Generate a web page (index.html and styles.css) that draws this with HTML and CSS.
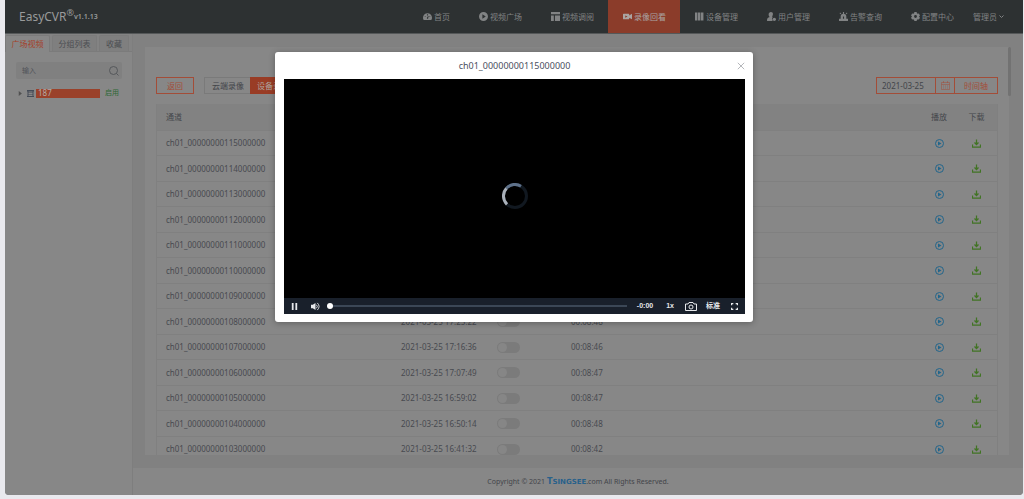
FILE: index.html
```html
<!DOCTYPE html>
<html lang="zh-CN">
<head>
<meta charset="utf-8">
<meta name="viewport" content="width=device-width, initial-scale=1">
<title>EasyCVR</title>
<link rel="stylesheet" href="styles.css">
</head>
<body>
<svg class="sprite" aria-hidden="true">
  <symbol id="gauge" viewBox="0 0 16 16"><path fill-rule="evenodd" d="M8 2a8 8 0 0 0-8 8c0 2 .6 3 1.300 4h13.400c.8-1 1.300-2 1.300-4a8 8 0 0 0-8-8zM7 4h2v2H7zM3 8h2v1H3zm8 0h2v1h-2zM9 7l1 0-1 5H7v-2z"/></symbol>
  <symbol id="playfill" viewBox="0 0 16 16"><path fill-rule="evenodd" d="M8 0a8 8 0 1 0 0 16A8 8 0 0 0 8 0zM6 4l6 4-6 4z"/></symbol>
  <symbol id="layout" viewBox="0 0 16 16"><path d="M0 0h16v4H0zM0 6h5v10H0zM7 6h9v10H7z"/></symbol>
  <symbol id="camera" viewBox="0 0 16 16"><path fill-rule="evenodd" d="M1 3h9q1 0 1 1v2l5-3v10l-5-3v2q0 1-1 1H1q-1 0-1-1V4q0-1 1-1zm3 3v4l4-2z"/></symbol>
  <symbol id="device" viewBox="0 0 16 16"><path d="M0 1h4v14H0zM5 1h4v14H5zM10 1h5v14h-5z"/></symbol>
  <symbol id="user" viewBox="0 0 16 16"><path d="M7 0c5 0 4 6 2 8l1 1-1 3 1 4H0c0-5 1-6 5-7C2 7 2 0 7 0z"/><circle cx="13" cy="13" r="3"/></symbol>
  <symbol id="alarm" viewBox="0 0 16 16"><path fill-rule="evenodd" d="M7 0h2v3H7zM1 2l1-1 2 2-1 1zM12 3l2-2 1 1-2 2zM3 12V8a5 5 0 0 1 10 0v4h3v4H0v-4zm4-4v4h2V8z"/></symbol>
  <symbol id="gear" viewBox="0 0 16 16"><path fill-rule="evenodd" d="M6 0h4l.5 2 1.500 1 2-.5 2 3.500-1.500 1.500v1L16 10l-2 3.500-2-.5-1.500 1L10 16H6l-.5-2L4 13l-2 .5L0 10l1.500-1.500v-1L0 6l2-3.500L4 3l1.500-1zM8 5.500a2.500 2.500 0 1 0 0 5 2.500 2.500 0 0 0 0-5z"/></symbol>
  <symbol id="play" viewBox="0 0 18 18"><circle cx="9" cy="9" r="8" fill="none" stroke="currentColor" stroke-width="2"/><path d="M6 5l7 4-7 4z"/></symbol>
  <symbol id="download" viewBox="0 0 18 18"><path d="M1 11v5h16v-5M9 1v10M5 7l4 4 4-4" fill="none" stroke="currentColor" stroke-width="2.500"/></symbol>
</svg>
<div class="app">
  <header class="header">
    <div class="brand">EasyCVR<sup>®</sup><span class="version">v1.1.13</span></div>
    <nav class="nav">
      <a href="#"><svg class="icon"><use href="#gauge"/></svg>首页</a>
      <a href="#"><svg class="icon"><use href="#playfill"/></svg>视频广场</a>
      <a href="#"><svg class="icon"><use href="#layout"/></svg>视频调阅</a>
      <a href="#" class="active"><svg class="icon"><use href="#camera"/></svg>录像回看</a>
      <a href="#"><svg class="icon"><use href="#device"/></svg>设备管理</a>
      <a href="#"><svg class="icon"><use href="#user"/></svg>用户管理</a>
      <a href="#"><svg class="icon"><use href="#alarm"/></svg>告警查询</a>
      <a href="#"><svg class="icon"><use href="#gear"/></svg>配置中心</a>
    </nav>
    <button class="account" type="button">管理员<svg class="chevron" viewBox="0 0 10 10"><path d="M1 3l4 4 4-4"/></svg></button>
  </header>
  <div class="body">
    <aside class="sidebar">
      <div class="tabs">
        <button type="button" class="current">广场视频</button>
        <button type="button">分组列表</button>
        <button type="button">收藏</button>
      </div>
      <div class="search">
        <input type="text" placeholder="输入" aria-label="输入">
        <svg viewBox="0 0 20 20"><circle cx="9" cy="9" r="8"/><path d="M15 15l4 4"/></svg>
      </div>
      <div class="tree">
        <svg class="caret" viewBox="0 0 6 8"><path d="M1 0l5 4-5 4z"/></svg>
        <svg class="server" viewBox="0 0 14 14"><path d="M0 0h14v3H0zM1 3h2v11H1zM11 3h2v11h-2zM3 5h8v1H3zM3 9h8v1H3zM0 12h14v2H0z"/></svg>
        <span class="node">187</span>
        <a href="#">启用</a>
      </div>
    </aside>
    <div class="content">
      <main class="panel">
        <div class="toolbar">
          <button type="button" class="outline back">返回</button>
          <div class="switch"><button type="button">云端录像</button><button type="button" class="on">设备录像</button></div>
          <div class="dates">
            <input type="text" value="2021-03-25" aria-label="日期">
            <button type="button" class="calendar" aria-label="选择日期"><svg viewBox="0 0 18 18"><path d="M1 3h16v14H1zM1 7h16M5 0v4M13 0v4M4 10h2M8 10h2M12 10h2M4 14h2M8 14h2M12 14h2"/></svg></button>
            <button type="button" class="axis">时间轴</button>
          </div>
        </div>
        <table class="records">
          <colgroup><col class="c-channel"><col class="c-time"><col class="c-lock"><col><col class="c-play"><col class="c-load"></colgroup>
          <thead><tr><th>通道</th><th>开始时间</th><th>锁定</th><th>时长</th><th class="mid">播放</th><th class="mid">下载</th></tr></thead>
          <tbody id="rows"></tbody>
        </table>
      </main>
      <footer class="footer">Copyright © 2021 <strong>T<small>SINGSEE</small></strong>.com All Rights Reserved.</footer>
    </div>
  </div>
  <div class="thumb"></div>
  <section class="dialog" role="dialog" aria-labelledby="title">
    <div class="dialog-head">
      <h2 id="title">ch01_00000000115000000</h2>
      <button type="button" aria-label="关闭"><svg viewBox="0 0 10 10"><path d="M1 1l8 8M9 1L1 9"/></svg></button>
    </div>
    <div class="screen">
      <svg class="spinner" viewBox="0 0 26 26"><circle cx="13" cy="13" r="11.500" stroke="#111820"/><path d="M5 21.300A11.500 11.500 0 0 1 4.500 5.200" stroke="#a9b0b9"/><path d="M4.500 5.200A11.500 11.500 0 0 1 19 3.200" stroke="#5e718a"/></svg>
    </div>
    <div class="controls">
      <button type="button" aria-label="暂停"><svg viewBox="0 0 10 10"><path d="M2 1h2v8H2zM6 1h2v8H6z"/></svg></button>
      <button type="button" class="volume" aria-label="音量"><svg viewBox="0 0 10 10"><path d="M0 3h2l3-2v8L2 7H0z"/><path class="line" d="M6 3q2 2 0 4M7 1q4 4 0 8"/></svg></button>
      <input type="range" value="0" aria-label="进度">
      <span class="remain">-0:00</span>
      <button type="button" class="rate">1x</button>
      <button type="button" class="snap" aria-label="截图"><svg viewBox="0 0 24 18"><path class="line" d="M1 4h5l2-3h8l2 3h5v13H1z"/><circle class="line" cx="12" cy="10" r="4"/></svg></button>
      <button type="button" class="quality">标准</button>
      <button type="button" class="full" aria-label="全屏"><svg viewBox="0 0 12 12"><path class="line" d="M1 4V1h3M8 1h3v3M11 8v3H8M4 11H1V8"/></svg></button>
    </div>
  </section>
</div>
<script src="app.js"></script>
</body>
</html>
```
FILE: styles.css
```css
* { box-sizing: border-box; }
body {
  margin: 0;
  padding: 0 1px 4px 5px;
  background: #e9e9ee;
  color: #43454a;
  font: 8px/12px "Noto Sans", "Noto Sans CJK SC", sans-serif;
}
button, input {
  margin: 0;
  padding: 0;
  border: 0;
  border-radius: 0;
  background: none;
  color: inherit;
  font: inherit;
}
a { color: inherit; text-decoration: none; }
svg { display: block; flex: none; fill: currentColor; }
.sprite { position: absolute; width: 0; height: 0; }
.app {
  position: relative;
  display: flex;
  flex-direction: column;
  height: calc(100vh - 4px);
  overflow: hidden;
  border-radius: 0 0 4px 4px;
  background: #818181;
}
.header {
  display: flex;
  flex: none;
  height: 34px;
  padding-right: 19px;
  border-bottom: 1px solid #555859;
  background: #2d3132;
  color: #818384;
}
.brand {
  display: flex;
  align-items: center;
  flex: 1;
  padding-left: 14px;
  color: #999b9b;
  font-size: 12px;
}
.brand sup { align-self: flex-start; padding-top: 7px; font-size: 9px; line-height: 12px; }
.version { font-size: 7px; font-weight: 600; }
.nav { display: flex; }
.nav a { display: flex; align-items: center; gap: 2px; padding: 0 14px 0 15px; }
.nav a.active { background: #8b3c2a; color: #aaa4a2; }
.icon { width: 9px; height: 9px; }
.account { display: flex; align-items: center; gap: 2px; padding-left: 5px; }
.chevron { width: 5px; height: 5px; fill: none; stroke: currentColor; stroke-width: 2; }
.body { display: flex; flex: 1; min-height: 0; }
.sidebar { flex: none; width: 128px; border-right: 1px solid #7e7e7e; background: #878787; }
.tabs { display: flex; gap: 2px; height: 18px; padding-top: 1px; background: #838383; border-bottom: 1px solid #7b7b7b; }
.tabs button {
  width: 45px;
  height: 16px;
  border: 1px solid #7b7b7b;
  border-bottom: 0;
  border-radius: 2px 2px 0 0;
  background: #7f7f7f;
  color: #4b4d51;
}
.tabs button:last-child { width: 30px; }
.tabs .current { height: 17px; background: #878787; color: #a44029; }
.search {
  display: flex;
  align-items: center;
  height: 17px;
  margin: 10px 10px 9px 11px;
  padding: 0 3px 0 6px;
  border-radius: 2px;
  background: #808080;
}
.search input { flex: 1; min-width: 0; font-size: 7px; }
.search input::placeholder { color: #515359; opacity: 1; }
.search svg { width: 10px; height: 10px; fill: none; stroke: #55575b; stroke-width: 2; }
.tree { display: flex; align-items: center; height: 10px; padding-left: 13px; }
.caret { width: 4px; height: 5px; margin-right: 5px; color: #515151; }
.server { width: 7px; height: 7px; margin-right: 2px; color: #444b57; }
.node { width: 64px; height: 9px; margin-right: 5px; padding-left: 2px; background: #9a412a; color: #b4aaa7; line-height: 8px; }
.tree a { color: #2f6735; font-size: 7px; }
.content { display: flex; flex: 1; flex-direction: column; min-width: 0; }
.panel {
  flex: 1;
  min-height: 0;
  margin: 13px 14px 13px 12px;
  padding: 30px 11px 0;
  overflow: hidden;
  background: #878787;
}
.toolbar { display: flex; height: 17px; margin-bottom: 10px; }
.outline { width: 38px; border: 1px solid #a34d38; color: #a34d38; }
.switch { display: flex; margin-left: 10px; border: 1px solid #7a7a7a; }
.switch button { width: 46px; }
.switch .on { margin: -1px; background: #993c25; color: #aea39f; }
.dates { display: flex; margin-left: auto; border: 1px solid #a34d38; color: #a34d38; }
.dates input { width: 58px; padding-left: 5px; color: #43454a; }
.calendar { display: grid; place-items: center; width: 20px; border: solid #a34d38; border-width: 0 1px; }
.calendar svg { width: 9px; height: 9px; fill: none; stroke: currentColor; stroke-width: 1; }
.axis { width: 42px; }
.records { width: 100%; border: 1px solid #808080; border-top: 0; border-collapse: separate; border-spacing: 0; table-layout: fixed; }
.records th { height: 26px; padding: 0 0 0 9px; background: #828282; color: #45474c; font-weight: 400; text-align: left; }
.records td { height: 25px; padding: 0 0 0 9px; border-top: 1px solid #808080; color: #484a50; }
.records tr:nth-child(even) td { height: 26px; }
.records .mid { padding: 0; text-align: center; }
.c-channel { width: 235px; }
.c-time { width: 96px; }
.c-lock { width: 74px; }
.c-play { width: 34px; }
.c-load { width: 41px; }
.mid button { display: block; margin: 0 auto; }
.mid svg { width: 9px; height: 9px; }
.see { color: #21658b; }
.get { color: #417424; }
.toggle { display: block; width: 23px; height: 11px; padding: 1px; border-radius: 6px; background: #7b7b7b; appearance: none; }
.toggle::before { display: block; width: 9px; height: 9px; border-radius: 50%; background: #868686; content: ""; }
.toggle:checked::before { margin-left: auto; }
.footer { flex: none; height: 27px; background: #878787; font-size: 7px; line-height: 27px; text-align: center; }
.footer strong { color: #28618b; font: bold 8px/12px "DejaVu Sans", sans-serif; }
.footer small { font-size: 7px; }
.thumb { position: absolute; top: 47px; right: 12px; width: 3px; height: 49px; border-radius: 2px; background: #727272; }
.dialog {
  position: absolute;
  top: 52px;
  left: 50%;
  width: 478px;
  max-width: 100%;
  padding: 0 8px 8px 9px;
  border-radius: 3px;
  background: #fff;
  box-shadow: 0 1px 6px rgba(0, 0, 0, .3);
  transform: translateX(-50%);
}
.dialog-head { display: flex; align-items: center; height: 27px; color: #4a4f60; }
.dialog-head h2 { flex: 1; margin: 0 -8px 0 0; font-size: 9px; font-weight: 400; line-height: 12px; text-align: center; }
.dialog-head svg { width: 8px; height: 8px; fill: none; stroke: #a2a4a9; stroke-width: 1; }
.screen { display: grid; place-items: center; height: 219px; padding-top: 14px; background: #000; }
.spinner { width: 26px; height: 26px; fill: none; stroke-width: 3; }
.controls { display: flex; align-items: center; height: 16px; padding: 0 7px 0 6px; background: #19202b; color: #e6e8eb; font-size: 7px; font-weight: 600; }
.controls svg { width: 9px; height: 9px; }
.controls .volume { margin: 0 7px 0 12px; }
.controls .line { fill: none; stroke: currentColor; stroke-width: 2; }
.controls .volume .line { stroke-width: 1; }
.controls input { flex: 1; min-width: 0; height: 6px; appearance: none; }
.controls input::-webkit-slider-runnable-track { height: 2px; background: #3b4756; }
.controls input::-webkit-slider-thumb { width: 6px; height: 6px; margin-top: -2px; border-radius: 50%; background: #fff; appearance: none; }
.remain { margin: 0 13px 0 10px; font-family: "Liberation Sans", sans-serif; }
.rate { margin-right: 11px; font-family: "Liberation Sans", sans-serif; }
.controls .snap svg { width: 12px; height: 9px; }
.quality { margin: 0 11px 0 9px; }
.controls .full svg { width: 7px; height: 7px; }
```
FILE: app.js
```js
const records = [
  ["115", "18:26:40", "00:08:45"],
  ["114", "18:17:55", "00:08:46"],
  ["113", "18:09:09", "00:08:47"],
  ["112", "18:00:22", "00:08:46"],
  ["111", "17:51:38", "00:08:47"],
  ["110", "17:42:51", "00:08:46"],
  ["109", "17:34:07", "00:08:47"],
  ["108", "17:25:22", "00:08:48"],
  ["107", "17:16:36", "00:08:46"],
  ["106", "17:07:49", "00:08:47"],
  ["105", "16:59:02", "00:08:47"],
  ["104", "16:50:14", "00:08:48"],
  ["103", "16:41:32", "00:08:42"]
];
document.getElementById("rows").innerHTML = records.map(([id, time, length]) => `
  <tr>
    <td>ch01_00000000${id}000000</td>
    <td>2021-03-25 ${time}</td>
    <td><input class="toggle" type="checkbox" aria-label="锁定 ${id}"></td>
    <td>${length}</td>
    <td class="mid"><button type="button" class="see" aria-label="播放"><svg><use href="#play"/></svg></button></td>
    <td class="mid"><button type="button" class="get" aria-label="下载"><svg><use href="#download"/></svg></button></td>
  </tr>`).join("");
```
